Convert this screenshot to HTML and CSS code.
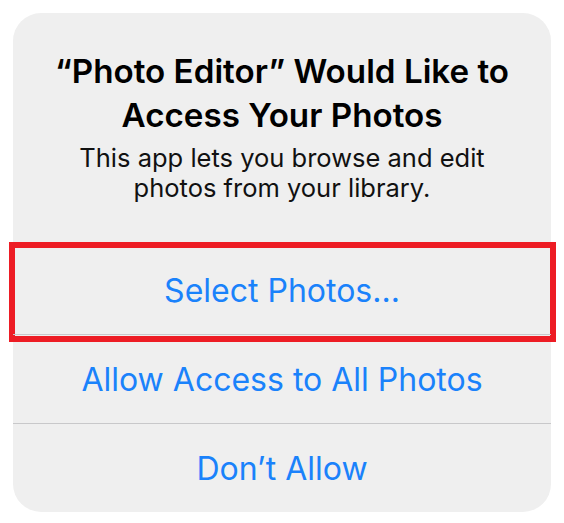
FILE: index.html
```html
<!DOCTYPE html>
<html lang="en">
<head>
<meta charset="utf-8">
<title>Photo access alert</title>
<link rel="stylesheet" href="styles.css">
</head>
<body>
<div class="alert">
  <div class="alert-header">
    <h1 class="alert-title">“Photo Editor” Would Like to Access Your Photos</h1>
    <p class="alert-message">This app lets you browse and edit photos from your library.</p>
  </div>
  <div class="alert-actions">
    <button class="alert-action is-highlighted">Select Photos...</button>
    <button class="alert-action">Allow Access to All Photos</button>
    <button class="alert-action">Don’t Allow</button>
  </div>
</div>
</body>
</html>
```

FILE: styles.css
```css
html, body {
  margin: 0;
  padding: 0;
  background: #ffffff;
}

body {
  padding: 13px 0 0 13px;
  font-family: "Inter", "Roboto", "Liberation Sans", sans-serif;
}

.alert {
  width: 538px;
  height: 499px;
  border-radius: 28px;
  background: #efefef;
  display: flex;
  flex-direction: column;
}

.alert-header {
  height: 232px;
  box-sizing: border-box;
  padding: 36px 24px 0;
  text-align: center;
}

.alert-title {
  margin: 0;
  font-size: 33.2px;
  line-height: 44px;
  font-weight: 600;
  color: #000000;
}

.alert-message {
  margin: 6px 0 0;
  font-size: 25.5px;
  line-height: 30px;
  font-weight: 400;
  color: #111111;
}

.alert-actions {
  display: flex;
  flex-direction: column;
}

.alert-action {
  position: relative;
  height: 89px;
  border: 0;
  border-top: 1px solid #c8c8ca;
  background: transparent;
  padding: 0;
  font-family: inherit;
  font-size: 32px;
  font-weight: 400;
  color: #1a82fb;
  text-align: center;
}

.is-highlighted::after {
  content: "";
  position: absolute;
  left: -4px;
  right: -5px;
  top: -4px;
  bottom: -8px;
  border: 6px solid #ed1c24;
}
```
